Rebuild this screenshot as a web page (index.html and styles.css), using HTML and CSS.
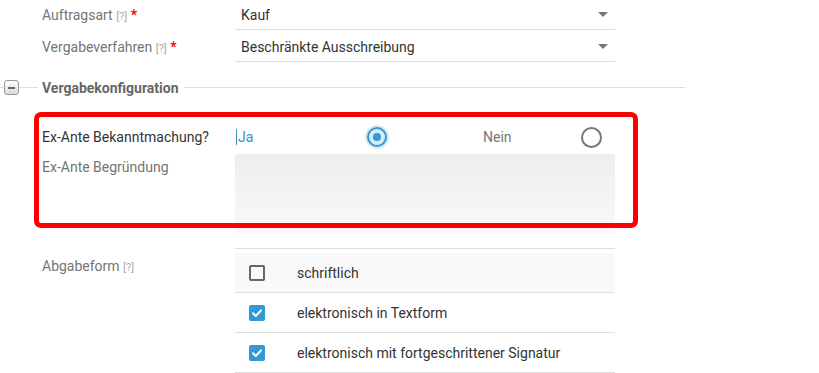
FILE: index.html
```html
<!DOCTYPE html>
<html lang="de">
<head>
  <meta charset="UTF-8" />
  <meta name="viewport" content="width=device-width, initial-scale=1.0" />
  <title>Vergabe</title>
  <link rel="stylesheet" href="styles.css">
</head>
<body>
  <main class="form">
    <div class="row row-select">
      <div class="label">Auftragsart <span class="help">[?]</span> <span class="req">*</span></div>
      <div class="field select">
        <span class="value">Kauf</span>
        <span class="caret"></span>
      </div>
    </div>
    <div class="row row-select">
      <div class="label">Vergabeverfahren <span class="help">[?]</span> <span class="req">*</span></div>
      <div class="field select">
        <span class="value">Beschränkte Ausschreibung</span>
        <span class="caret"></span>
      </div>
    </div>

    <section class="group">
      <div class="group-head">
        <span class="line line-start"></span>
        <button class="toggle" type="button"><span class="minus"></span></button>
        <span class="line line-short"></span>
        <span class="legend">Vergabekonfiguration</span>
        <span class="line line-rest"></span>
      </div>

      <div class="row row-radio">
        <div class="label label-dark">Ex-Ante Bekanntmachung?</div>
        <div class="field radios">
          <label class="option option-yes">
            <span class="opt-text opt-active"><span class="cursor"></span>Ja</span>
            <span class="radio checked"><span class="dot"></span></span>
          </label>
          <label class="option option-no">
            <span class="opt-text">Nein</span>
            <span class="radio"></span>
          </label>
        </div>
      </div>

      <div class="row row-text">
        <div class="label">Ex-Ante Begründung</div>
        <div class="field textarea"></div>
      </div>

      <!-- annotation frame -->
      <div class="highlight"></div>
    </section>

    <div class="row row-checks">
      <div class="label">Abgabeform <span class="help">[?]</span></div>
      <ul class="field checks">
        <li class="check-row hover">
          <span class="box"></span>
          <span>schriftlich</span>
        </li>
        <li class="check-row">
          <span class="box on">
            <svg viewBox="0 0 16 16" width="16" height="16"><path d="M4 8.3 L6.8 11 L12 5.4" fill="none" stroke="#fff" stroke-width="2" stroke-linecap="round" stroke-linejoin="round"/></svg>
          </span>
          <span>elektronisch in Textform</span>
        </li>
        <li class="check-row">
          <span class="box on">
            <svg viewBox="0 0 16 16" width="16" height="16"><path d="M4 8.3 L6.8 11 L12 5.4" fill="none" stroke="#fff" stroke-width="2" stroke-linecap="round" stroke-linejoin="round"/></svg>
          </span>
          <span>elektronisch mit fortgeschrittener Signatur</span>
        </li>
      </ul>
    </div>
  </main>
</body>
</html>
```

FILE: styles.css
```css
/* --- reset ---------------------------------------------------------- */
* {
  margin: 0;
  padding: 0;
  box-sizing: border-box;
}

:root {
  --label: #757575;
  --text: #333;
  --line: #dedede;
  --blue: #3399d4;
}

body {
  font-family: Roboto, "Liberation Sans", Arial, sans-serif;
  font-size: 14px;
  color: var(--text);
  background: #fff;
}

/* --- rows ----------------------------------------------------------- */
.form {
  width: 685px;
}

.row {
  display: flex;
}

.label {
  width: 235px;
  padding-left: 42px;
  color: var(--label);
  line-height: 20px;
}

.label-dark {
  color: var(--text);
}

.help {
  font-size: 11px;
  color: #aaa;
}

.req {
  color: #f00;
  font-weight: 700;
}

.field {
  width: 380px;
}

/* --- selects -------------------------------------------------------- */
.row-select {
  height: 30px;
  margin-bottom: 2px;
}
.row-select .label {
  line-height: 30px;
}

.select {
  display: flex;
  align-items: center;
  justify-content: space-between;
  height: 30px;
  padding: 0 7px 0 6px;
  border-bottom: 1px solid var(--line);
}

.caret {
  width: 0;
  height: 0;
  border-left: 5px solid transparent;
  border-right: 5px solid transparent;
  border-top: 5px solid #777;
}

/* --- group ---------------------------------------------------------- */
.group {
  position: relative;
  margin-top: 18px;
}

.group-head {
  display: flex;
  align-items: center;
  height: 15px;
}

.line {
  height: 1px;
  background: var(--line);
}
.line-start { width: 4px; }
.line-short { width: 19px; margin-right: 4px; }
.line-rest { flex: 1; margin-left: 5px; }

.toggle {
  width: 15px;
  height: 15px;
  border: 1px solid #999;
  border-radius: 3px;
  background: linear-gradient(#fdfdfd, #dcdcdc);
  display: flex;
  align-items: center;
  justify-content: center;
}
.minus {
  width: 7px;
  height: 2px;
  background: #666;
}

.legend {
  font-weight: 700;
  font-size: 14px;
  color: #666;
}

/* --- radios --------------------------------------------------------- */
.row-radio {
  margin-top: 30px;
  height: 24px;
  align-items: center;
}

.radios {
  display: flex;
  align-items: center;
}

.option {
  display: flex;
  align-items: center;
  justify-content: space-between;
}
.option-yes {
  width: 154px;
  padding-left: 1px;
}
.option-no {
  width: 120px;
  margin-left: 94px;
}

.opt-text {
  color: var(--label);
  display: flex;
  align-items: center;
}
.opt-active {
  color: #3d8fcc;
}
.cursor {
  width: 1px;
  height: 16px;
  background: #3d8fcc;
  margin-right: 1px;
}

.radio {
  width: 24px;
  height: 24px;
  position: relative;
  display: flex;
  align-items: center;
  justify-content: center;
}
.radio::before {
  content: "";
  width: 17px;
  height: 17px;
  border: 2px solid #777;
  border-radius: 50%;
}
.radio.checked {
  background: #d7eaf6;
  border-radius: 50%;
}
.radio.checked::before {
  width: 16px;
  height: 16px;
  border-color: var(--blue);
}
.dot {
  position: absolute;
  width: 8px;
  height: 8px;
  border-radius: 50%;
  background: var(--blue);
}

/* --- textarea ------------------------------------------------------- */
.row-text {
  margin-top: 5px;
}
.row-text .label {
  padding-top: 3px;
}
.textarea {
  height: 80px;
  border-radius: 2px;
  background: linear-gradient(#eeeeee, #f9f9f9);
}

/* annotation frame round the ex-ante block */
.highlight {
  position: absolute;
  left: 34px;
  top: 32px;
  width: 604px;
  height: 116px;
  border: 5px solid #f00;
  border-radius: 7px;
  pointer-events: none;
}

/* --- checkbox list -------------------------------------------------- */
.row-checks {
  margin-top: 14px;
}
.row-checks .label {
  padding-top: 8px;
}

.checks {
  list-style: none;
  border-top: 1px solid var(--line);
  padding-top: 4px;
}

.check-row {
  display: flex;
  align-items: center;
  gap: 32px;
  height: 40px;
  padding-left: 14px;
  border-bottom: 1px solid var(--line);
  color: var(--text);
  font-size: 14px;
}
.check-row.hover {
  background: #f9f9f9;
}

.box {
  width: 16px;
  height: 16px;
  border: 2px solid #666;
  border-radius: 2px;
  flex-shrink: 0;
}
.box.on {
  border: 0;
  background: var(--blue);
}
.box svg {
  display: block;
}
```
